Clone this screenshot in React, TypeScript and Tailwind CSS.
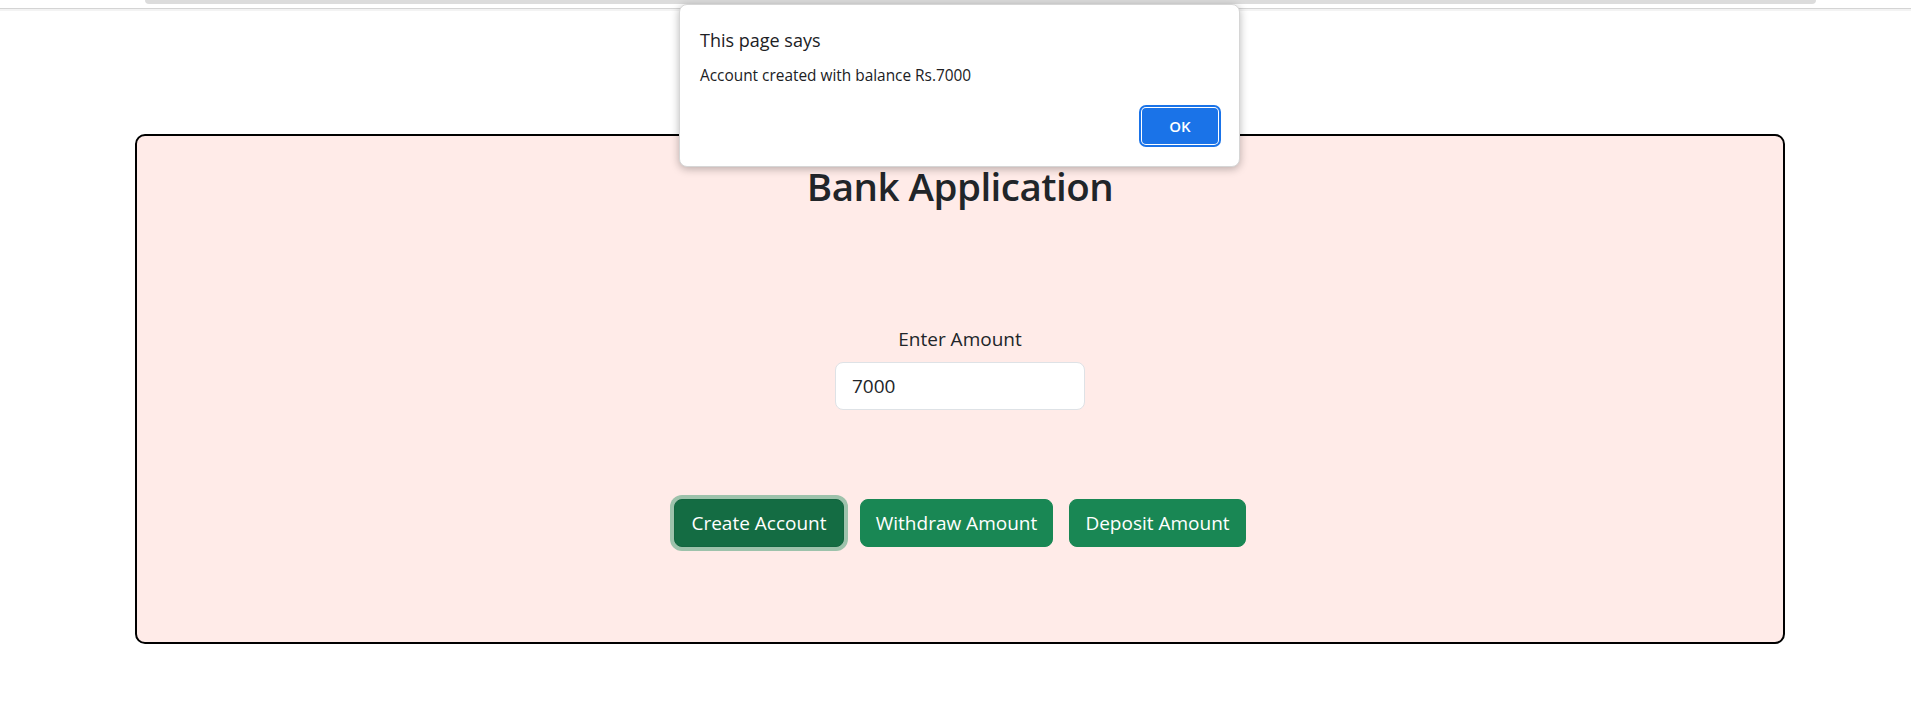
export default function App() {
  const font = { fontFamily: '"Open Sans", "Noto Sans", sans-serif' };
  return (
    <div className="relative w-[1911px] h-[711px] bg-white overflow-hidden font-['Open_Sans',_'Noto_Sans',_sans-serif] text-[#212529]">
      {/* browser chrome remnant */}
      <div className="ml-[145px] w-[1671px] h-[4px] bg-[#dcdcdc] rounded-b-[6px]" />
      <div className="mt-[4px] h-px bg-[#d4d4d4]" />
      <div className="h-[2px] bg-[#f3f3f3]" />

      {/* card */}
      <div className="mt-[123px] ml-[135px] w-[1650px] h-[510px] border-2 border-black rounded-[10px] bg-[#ffebe8] flex flex-col items-center">
        <h1 className="mt-[26px] text-[38.5px] leading-[48px] tracking-[-0.5px] font-semibold text-[#212529]">Bank Application</h1>
        <label className="mt-[114px] text-[19px] leading-[30px] text-[#212529]">Enter Amount</label>
        <input
          readOnly
          value="7000"
          className="mt-[8px] w-[250px] h-[48px] px-[16px] bg-white border border-[#dee2e6] rounded-[8px] text-[19px] leading-[30px] text-[#212529] outline-none"
        />
        <div className="mt-[89px] flex gap-[16px]">
          <button className="w-[170px] h-[48px] rounded-[8px] bg-[#146c43] border border-[#13653f] text-white text-[19px] leading-[30px] shadow-[0_0_0_4px_rgba(60,153,110,0.5)]">
            Create Account
          </button>
          <button className="w-[193px] h-[48px] rounded-[8px] bg-[#198754] border border-[#198754] text-white text-[19px] leading-[30px]">
            Withdraw Amount
          </button>
          <button className="w-[177px] h-[48px] rounded-[8px] bg-[#198754] border border-[#198754] text-white text-[19px] leading-[30px]">
            Deposit Amount
          </button>
        </div>
      </div>

      {/* alert dialog */}
      <div
        style={font}
        className="absolute left-[679px] top-[4px] w-[561px] h-[163px] bg-white rounded-[8px] border border-[#d6d6d6] shadow-[0_2px_8px_rgba(0,0,0,0.28)] flex flex-col px-[20px]"
      >
        <div className="mt-[23px] text-[18px] leading-[24px] text-[#202124]">This page says</div>
        <div className="mt-[14px] text-[15.4px] leading-[20px] text-[#202124]">Account created with balance Rs.7000</div>
        <div className="flex justify-end mt-[22px]">
          <button className="mr-[1px] w-[76px] h-[36px] rounded-[4px] bg-[#1a73e8] text-white text-[15px] font-semibold ring-2 ring-[#1a73e8] ring-offset-1 ring-offset-white">
            OK
          </button>
        </div>
      </div>
    </div>
  );
}
